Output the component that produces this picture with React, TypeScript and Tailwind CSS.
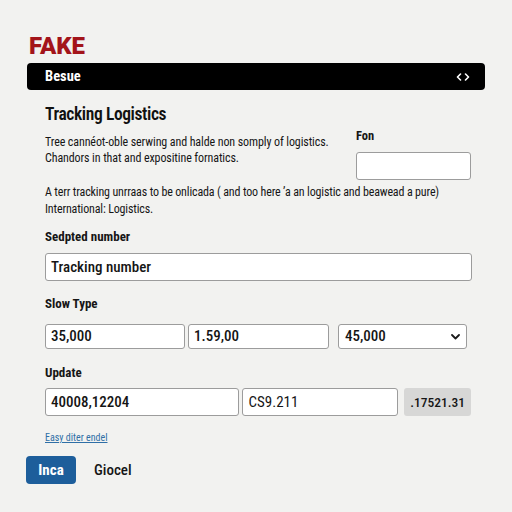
const Chevrons = () => (
  <svg width="14" height="8" viewBox="0 0 14 8" fill="none" stroke="white" strokeWidth="1.6" strokeLinecap="round" strokeLinejoin="round">
    <path d="M4.5 1 L1.5 4 L4.5 7" />
    <path d="M9.5 1 L12.5 4 L9.5 7" />
  </svg>
);

const ChevronDown = () => (
  <svg width="9" height="6" viewBox="0 0 9 6" fill="none" stroke="#1a1a1a" strokeWidth="1.8" strokeLinecap="round" strokeLinejoin="round">
    <path d="M1 1 L4.5 4.5 L8 1" />
  </svg>
);

const Field = ({ value, className }: { value: string; className: string }) => (
  <div
    className={`flex items-center bg-white border border-[#9c9c9c] rounded-[3px] pl-[5px] text-[15px] text-[#151515] ${className}`}
  >
    {value}
  </div>
);

const App = () => {
  return (
    <div className="min-h-[512px] w-[512px] bg-[#f2f2f0] text-[#161616] font-['Roboto_Condensed','Roboto',sans-serif]">
      <div className="px-[27px] pt-[34px]">
        <div className="pl-[2px] text-[24px] leading-[24px] font-black text-[#a3141a] font-['Roboto',sans-serif]">FAKE</div>

        <div className="mt-[5px] h-[27px] bg-black rounded-[4px] flex items-center justify-between pl-[18px] pr-[15px]">
          <span className="text-[14.5px] font-bold text-white">Besue</span>
          <Chevrons />
        </div>

        <div className="pl-[18px] pr-[14px]">
          <h1 className="mt-[13px] text-[17.5px] leading-[22px] font-semibold tracking-[-0.4px] text-[#111]">Tracking Logistics</h1>

          <div className="mt-[9px] flex items-start justify-between">
            <p className="text-[12px] leading-[16px] tracking-[-0.1px] whitespace-nowrap">
              Tree cannéot-oble serwing and halde non somply of logistics.
              <br />
              Chandors in that and expositine fornatics.
            </p>
            <div className="-mt-[6px] w-[115px]">
              <div className="text-[12.5px] leading-[16px] font-bold">Fon</div>
              <div className="mt-[8px] h-[28px] bg-white border border-[#9c9c9c] rounded-[3px]" />
            </div>
          </div>

          <p className="mt-[4px] text-[12px] leading-[17px] tracking-[-0.15px] whitespace-nowrap">
            A terr tracking unrraas to be onlicada ( and too here ’a an logistic and beawead a pure)
            <br />
            International: Logistics.
          </p>

          <div className="mt-[11px] text-[13px] leading-[16px] font-bold">Sedpted number</div>
          <Field value="Tracking number" className="mt-[8px] h-[28px] w-[427px] font-medium" />

          <div className="mt-[15px] text-[13px] leading-[16px] font-bold">Slow Type</div>
          <div className="mt-[12px] flex">
            <Field value="35,000" className="h-[25px] w-[140px] font-medium" />
            <Field value="1.59,00" className="ml-[3px] h-[25px] w-[141px] font-medium" />
            <div className="ml-[9px] h-[25px] w-[129px] flex items-center justify-between bg-white border border-[#9c9c9c] rounded-[3px] pl-[6px] pr-[6px] text-[15px] font-medium">
              <span>45,000</span>
              <ChevronDown />
            </div>
          </div>

          <div className="mt-[16px] text-[13px] leading-[16px] font-bold">Update</div>
          <div className="mt-[7px] flex">
            <Field value="40008,12204" className="h-[28px] w-[194px] font-medium" />
            <Field value="CS9.211" className="ml-[3px] h-[28px] w-[157px] pl-[6px]" />
            <div className="ml-[6px] h-[28px] w-[67px] flex items-center justify-center bg-[#d7d7d6] rounded-[3px] text-[13.5px] font-medium">
              .17521.31
            </div>
          </div>

          <a href="#" className="mt-[16px] block w-fit text-[10px] leading-[12px] text-[#2f6fa6] underline">
            Easy diter endel
          </a>
        </div>

        <div className="mt-[12px] -ml-[1px] flex items-center gap-[18px]">
          <button className="h-[28px] w-[50px] rounded-[4px] bg-[#1d5e9b] text-white text-[15px] font-bold">Inca</button>
          <span className="text-[15px] font-medium">Giocel</span>
        </div>
      </div>
    </div>
  );
};

export default App;
